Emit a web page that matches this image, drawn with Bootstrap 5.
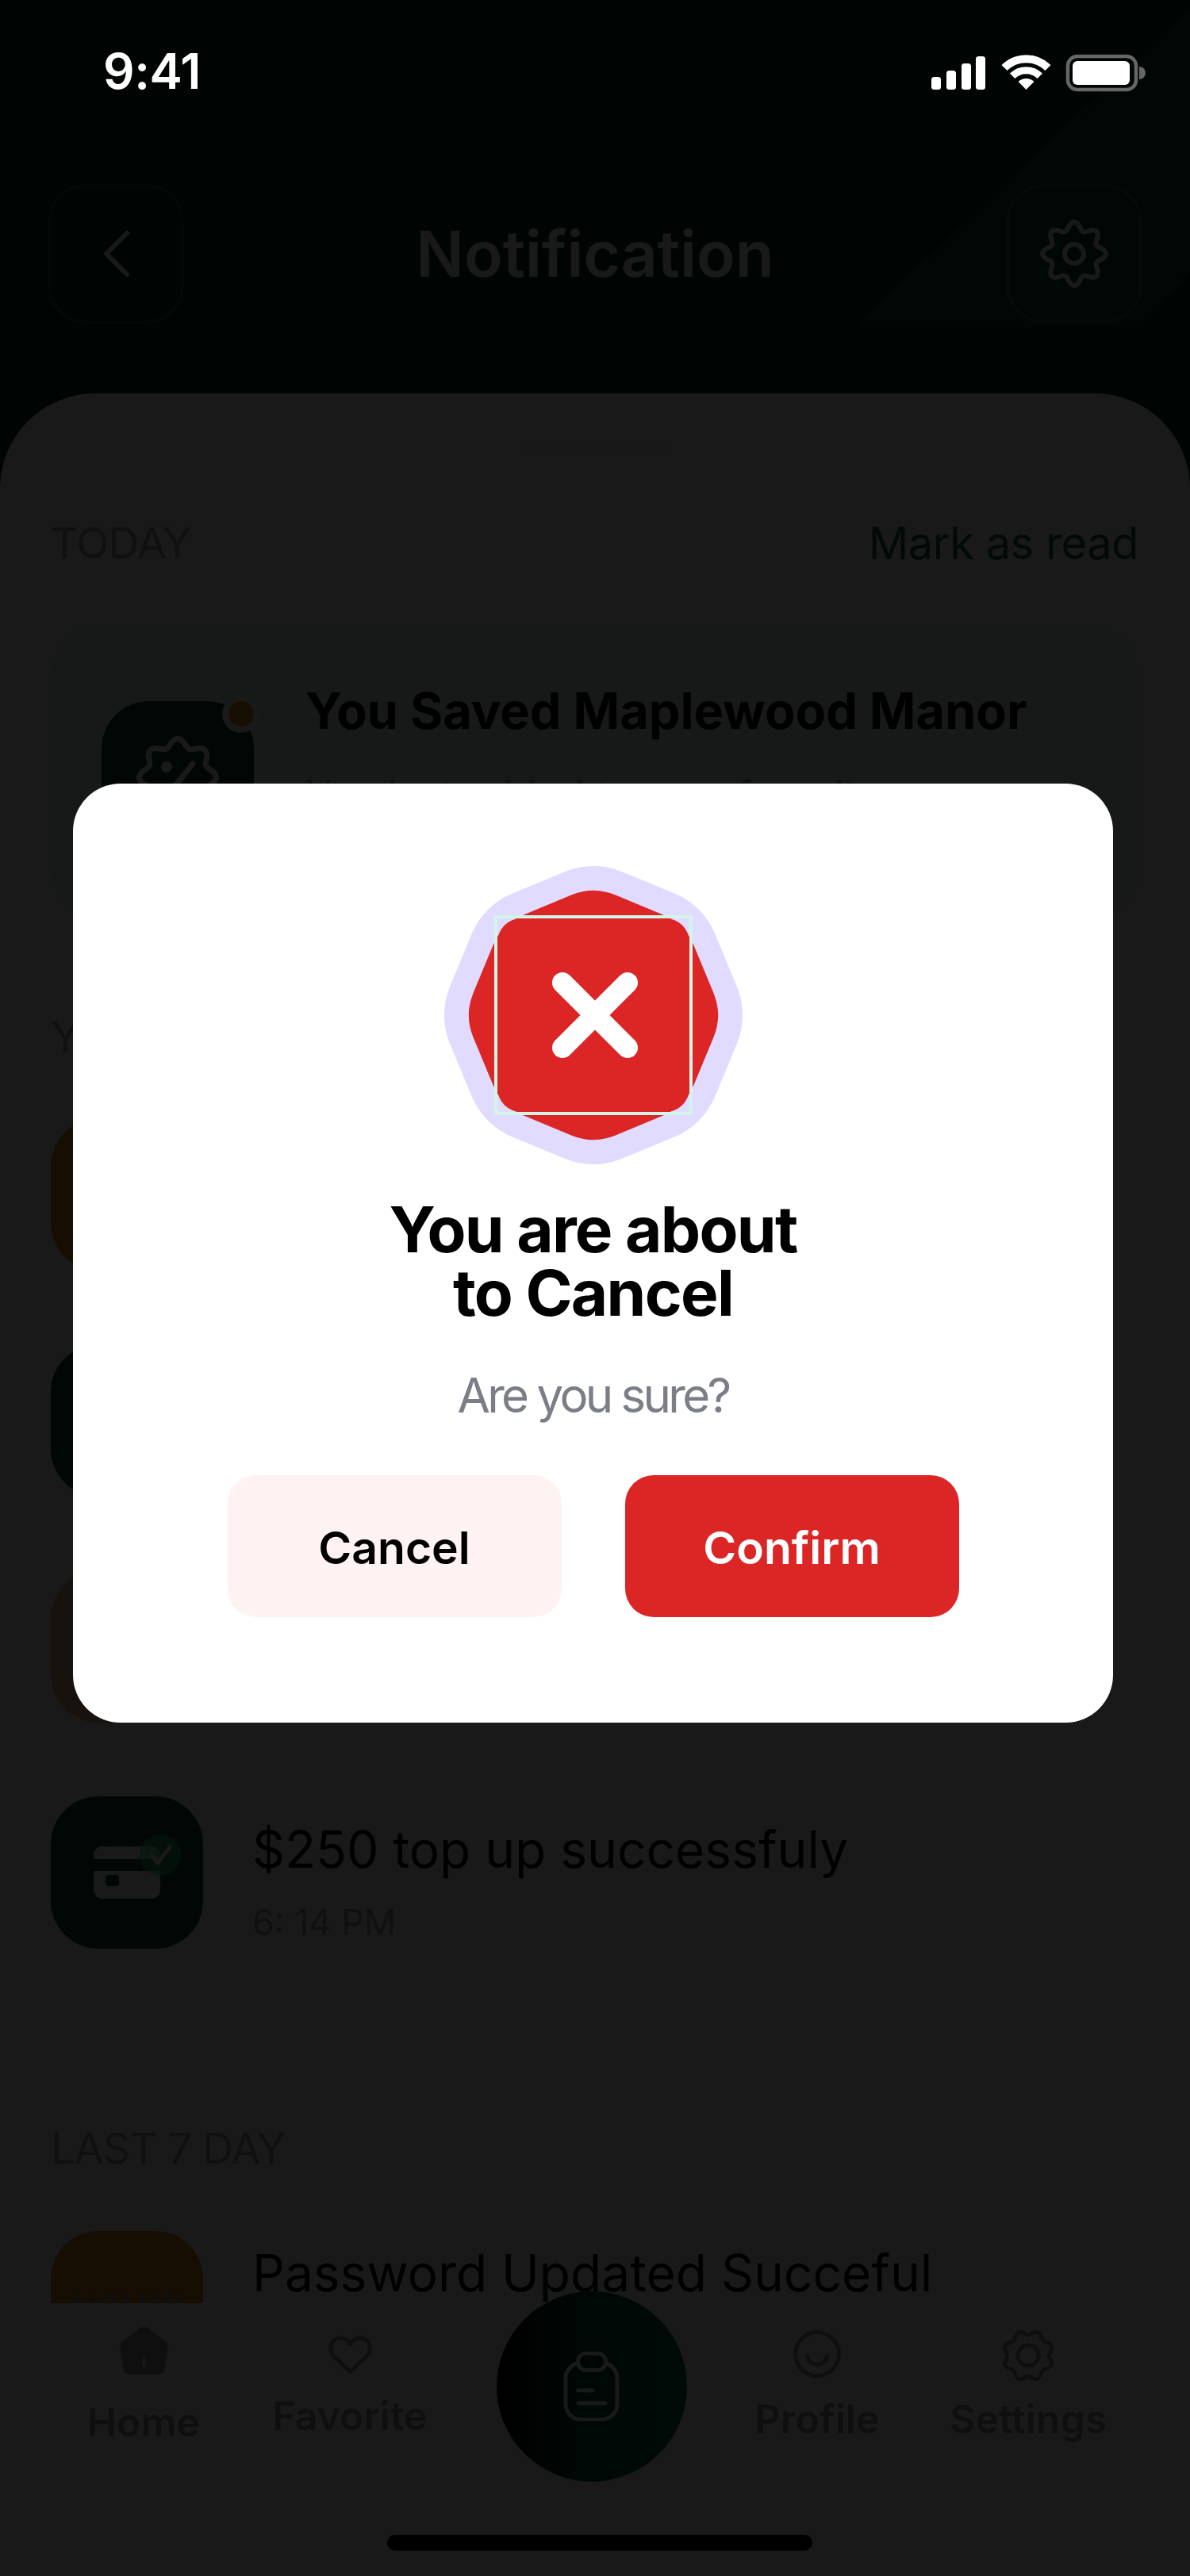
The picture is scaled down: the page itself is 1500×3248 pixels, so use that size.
<!DOCTYPE html>
<html lang="en">
<head>
  <meta charset="UTF-8">
  <meta name="viewport" content="width=device-width, initial-scale=1">
  <title>Notification</title>
  <link href="https://cdn.jsdelivr.net/npm/bootstrap@5.3.3/dist/css/bootstrap.min.css" rel="stylesheet">
  <style>
    :root {
      --verde-escuro: #002a20;
      --vermelho: #dc2626;
    }

    body {
      margin: 0;
      background: #000;
      font-family: "Inter", "Liberation Sans", sans-serif;
    }

    .tela {
      position: relative;
      width: 1500px;
      height: 3248px;
      overflow: hidden;
      background: var(--verde-escuro);
    }

    .fundo-topo {
      position: absolute;
      left: 0;
      top: 0;
    }

    /* status bar */
    .barra-status {
      position: relative;
      z-index: 5;
      height: 232px;
      padding: 48px 55px 0 130px;
      color: #fff;
      font-size: 62px;
      font-weight: 600;
      line-height: 84px;
      letter-spacing: -.5px;
    }

    .barra-status svg {
      margin-top: 12px;
    }

    /* header */
    .cabecalho {
      position: relative;
      height: 264px;
      padding: 0 60px;
    }

    .botao-topo {
      width: 172px;
      height: 176px;
      border: 4px solid rgba(255, 255, 255, .14);
      border-radius: 48px;
    }

    .titulo-topo {
      margin-top: 40px;
      color: #fff;
      font-size: 80px;
      font-weight: 600;
      line-height: 96px;
    }

    /* sheet */
    .folha {
      position: relative;
      height: 2408px;
      padding: 62px 65px 0 64px;
      overflow: hidden;
      background: #fff;
      border-radius: 120px 120px 0 0;
    }

    .puxador {
      width: 190px;
      height: 14px;
      margin: 0 auto 83px;
      border-radius: 7px;
      background: #eee;
    }

    .secao {
      height: 60px;
      font-size: 54px;
      line-height: 60px;
      color: #a0a3ad;
      letter-spacing: -1px;
    }

    .marcar {
      color: #146a50;
      font-size: 56px;
      letter-spacing: -.5px;
    }

    .cartao-aviso {
      height: 372px;
      margin: 73px 0 118px;
      padding: 96px 64px 0;
      gap: 65px;
      background: #eafff8;
      border-radius: 64px;
    }

    .caixa-icone {
      position: relative;
      flex: none;
      width: 192px;
      height: 192px;
      border-radius: 60px;
      background: #004a38;
    }

    .caixa-laranja { background: #e89020; }
    .caixa-areia { background: #f0ba90; }

    .ponto-novo {
      position: absolute;
      right: -8px;
      top: -8px;
      width: 48px;
      height: 48px;
      border: 8px solid #fff;
      border-radius: 50%;
      background: #ee9a20;
    }

    .selo-ok {
      position: absolute;
      left: 110px;
      top: 46px;
    }

    .linha-aviso {
      gap: 62px;
      height: 192px;
      margin-top: 93px;
    }

    .primeira { margin-top: 72px; }

    .aviso-titulo {
      color: #000;
      font-size: 64px;
      line-height: 76px;
    }

    .aviso-titulo-forte {
      margin-top: -26px;
      color: #000;
      font-size: 63px;
      font-weight: 700;
      line-height: 76px;
    }

    .aviso-sub {
      margin-top: 24px;
      color: #a0a3ad;
      font-size: 44.5px;
      line-height: 60px;
    }

    .aviso-sub-cartao {
      margin-top: 38px;
      font-size: 50px;
    }

    .texto-aviso { padding-top: 26px; }
    .ultimo-titulo { margin-top: 15px; }

    .ultima-secao { margin-top: 222px; }
    .ultima-linha { margin-top: 74px; }

    .rotulo-data {
      padding-top: 63px;
      color: #a09070;
      font-size: 44px;
      font-weight: 600;
      line-height: 66px;
      text-align: center;
    }

    /* bottom nav */
    .grade-nav {
      display: grid;
      grid-template-columns: 262px 258px 352px 216px 316px;
      height: 224px;
      padding-left: 50px;
      background: #fff;
    }

    .item-nav {
      color: #999;
      font-size: 50px;
      font-weight: 600;
      line-height: 60px;
      text-align: center;
    }

    .item-nav svg { display: block; margin: 0 auto; }
    .nav-home { padding-top: 30px; }
    .nav-home span { display: block; margin-top: 30px; }
    .nav-fav { padding-top: 41px; }
    .nav-fav span { display: block; margin-top: 22px; }
    .nav-perfil { padding-top: 34px; }
    .nav-perfil span { display: block; margin-top: 22px; }
    .nav-ajustes { padding-top: 32px; }
    .nav-ajustes span { display: block; margin-top: 16px; }

    .botao-central {
      position: relative;
      width: 240px;
      height: 240px;
      margin: -15px auto 0;
      border-radius: 50%;
      background: linear-gradient(90deg, #000 0%, #00503a 45%, #006a44 100%);
    }

    .barra-home {
      width: 536px;
      height: 20px;
      margin: 0 0 0 488px;
      border-radius: 10px;
      background: #000;
    }

    .faixa-home {
      height: 120px;
      padding-top: 68px;
      background: #fff;
    }

    /* dialog */
    .fundo-modal {
      position: absolute;
      inset: 0;
      z-index: 4;
      padding: 988px 0 0 92px;
      background: rgba(0, 0, 0, .9);
    }

    .dialogo {
      width: 1311px;
      height: 1184px;
      padding-top: 104px;
      border: 0;
      border-radius: 60px;
      background: #fff;
    }

    .dialogo-titulo {
      margin: 42px 0 0;
      color: #000;
      font-size: 80px;
      font-weight: 700;
      line-height: 80px;
      letter-spacing: -1.7px;
    }

    .dialogo-sub {
      margin: 54px 0 66px;
      color: #7b7d87;
      font-size: 60px;
      line-height: 70px;
      letter-spacing: -3.7px;
    }

    .fila-botoes { gap: 80px; }

    .botao-dialogo {
      width: 421px;
      height: 179px;
      padding-top: 10px;
      border: 0;
      border-radius: 36px;
      font-size: 57px;
      font-weight: 600;
    }

    .botao-cancelar, .botao-cancelar:hover { background: #fef2f2; color: #000; }
    .botao-confirmar, .botao-confirmar:hover { background: var(--vermelho); color: #fff; }
  </style>
</head>
<body>

  <div class="tela">

    <!-- fundo do topo -->
    <svg class="fundo-topo" width="1500" height="500" viewBox="0 0 1500 500">
      <polygon points="1500,10 1076,413 1440,413 1500,343" fill="#004c32"/>
      <path d="M167 0 L0 167 M1368 0 L966 410 M980 350 L1060 260 M800 500 L850 430" stroke="#1a3a32" stroke-width="4"/>
    </svg>

    <div class="barra-status d-flex justify-content-between align-items-start">
      <span>9:41</span>
      <svg width="275" height="60" viewBox="1170 60 275 60">
        <g fill="#fff">
          <rect x="1174" y="97" width="12" height="16" rx="3.5"/>
          <rect x="1193" y="89" width="12" height="24" rx="3.5"/>
          <rect x="1212" y="80" width="12" height="33" rx="3.5"/>
          <rect x="1230" y="71" width="12" height="42" rx="3.5"/>
          <path d="M1293.5 113 L1283.6 103.1 A14 14 0 0 1 1303.4 103.1 Z"/>
        </g>
        <g fill="none" stroke="#fff">
          <path d="M1276.2 95.8 A24.5 24.5 0 0 1 1310.8 95.8" stroke-width="9"/>
          <path d="M1266 85.5 A39 39 0 0 1 1321 85.5" stroke-width="10"/>
        </g>
        <rect x="1346" y="71" width="86" height="42" rx="12" fill="none" stroke="#666" stroke-width="4.5"/>
        <rect x="1352" y="77" width="72" height="30" rx="6" fill="#fff"/>
        <path d="M1436 84 A8 8 0 0 1 1436 100 Z" fill="#666"/>
      </svg>
    </div>

    <div class="cabecalho d-flex justify-content-between align-items-start">
      <div class="botao-topo d-flex align-items-center justify-content-center">
        <svg width="40" height="64" viewBox="0 0 40 64"><path d="M34 6 L8 32 L34 58" fill="none" stroke="#fff" stroke-width="6" stroke-linecap="round" stroke-linejoin="round"/></svg>
      </div>
      <div class="titulo-topo">Notification</div>
      <div class="botao-topo d-flex align-items-center justify-content-center">
        <svg width="92" height="92" viewBox="-46 -46 92 92">
          <path class="engrenagem" data-r="35" data-a="-5" fill="none" stroke="#fff" stroke-width="6"/>
          <circle r="12" fill="none" stroke="#fff" stroke-width="6"/>
        </svg>
      </div>
    </div>

    <div class="folha">
      <div class="puxador"></div>

      <div class="d-flex justify-content-between secao">
        <span>TODAY</span>
        <span class="marcar">Mark as read</span>
      </div>

      <div class="cartao-aviso d-flex align-items-start">
        <div class="caixa-icone">
          <span class="ponto-novo"></span>
          <svg class="d-block" width="192" height="192" viewBox="-96 -96 192 192">
            <path class="engrenagem" data-r="43.5" data-a="-5" fill="none" stroke="#fff" stroke-width="7"/>
            <circle cx="-14" cy="-13" r="7" fill="#fff"/>
            <path d="M-14 24 L19 -17" stroke="#fff" stroke-width="7" stroke-linecap="round"/>
          </svg>
        </div>
        <div>
          <div class="aviso-titulo-forte">You Saved Maplewood Manor</div>
          <div class="aviso-sub aviso-sub-cartao">You just added to your favorite</div>
        </div>
      </div>

      <div class="secao">YESTERDAY</div>

      <div class="linha-aviso primeira d-flex"><div class="caixa-icone caixa-laranja"></div></div>
      <div class="linha-aviso d-flex"><div class="caixa-icone"></div></div>
      <div class="linha-aviso d-flex"><div class="caixa-icone caixa-areia"></div></div>

      <div class="linha-aviso d-flex align-items-center">
        <div class="caixa-icone">
          <svg class="d-block" width="192" height="192" viewBox="0 0 192 192">
            <rect x="54" y="63" width="84" height="66" rx="11" fill="#fff"/>
            <rect x="54" y="79" width="84" height="15" fill="#004a38"/>
            <rect x="69" y="99" width="17" height="14" rx="4" fill="#004a38"/>
          </svg>
          <svg class="selo-ok" width="56" height="56" viewBox="0 0 56 56">
            <circle cx="28" cy="28" r="26" fill="#2fd97a" fill-opacity=".6"/>
            <path d="M17 29 L25 38 L40 18" fill="none" stroke="#fff" stroke-width="5" stroke-linecap="round" stroke-linejoin="round"/>
          </svg>
        </div>
        <div class="texto-aviso">
          <div class="aviso-titulo">$250 top up successfuly</div>
          <div class="aviso-sub">6: 14 PM</div>
        </div>
      </div>

      <div class="secao ultima-secao">LAST 7 DAY</div>

      <div class="linha-aviso ultima-linha d-flex align-items-start">
        <div class="caixa-icone caixa-laranja rotulo-data">NOV10</div>
        <div class="aviso-titulo ultimo-titulo">Password Updated Succeful</div>
      </div>
    </div>

    <nav class="grade-nav">
      <div class="item-nav nav-home">
        <svg width="61" height="60" viewBox="0 0 61 60">
          <path d="M24 2 Q30.5 -2 37 2 L57 18 Q61 21 60.5 26 L57 52 Q56 60 48 60 L13 60 Q5 60 4 52 L.5 26 Q0 21 4 18 Z" fill="#999"/>
          <rect x="28.5" y="37" width="4" height="13" fill="#fff"/>
        </svg>
        <span>Home</span>
      </div>
      <div class="item-nav nav-fav">
        <svg width="55" height="49" viewBox="0 0 55 49">
          <path d="M27.5 45.5 L7 26 C-2 15 5 3 15 3 C21 3 25 6 27.5 11 C30 6 34 3 40 3 C50 3 57 15 48 26 Z" fill="none" stroke="#999" stroke-width="5" stroke-linejoin="round"/>
        </svg>
        <span>Favorite</span>
      </div>
      <div>
        <div class="botao-central d-flex align-items-center justify-content-center">
          <svg width="72" height="88" viewBox="0 0 72 88">
            <rect x="3" y="14" width="65" height="72" rx="20" fill="none" stroke="#fff" stroke-width="5"/>
            <rect x="18.5" y="2.5" width="35" height="21" rx="10" fill="#004030" stroke="#fff" stroke-width="5"/>
            <path d="M19 49 H37 M19 65 H53" stroke="#fff" stroke-width="5" stroke-linecap="round"/>
          </svg>
        </div>
      </div>
      <div class="item-nav nav-perfil">
        <svg width="60" height="60" viewBox="0 0 60 60">
          <circle cx="30" cy="30" r="27.5" fill="none" stroke="#999" stroke-width="5"/>
          <path d="M17 30 A13 13 0 0 0 43 30" fill="none" stroke="#999" stroke-width="5"/>
        </svg>
        <span>Profile</span>
      </div>
      <div class="item-nav nav-ajustes">
        <svg width="68" height="68" viewBox="-34 -34 68 68">
          <path class="engrenagem" data-r="29" data-a="2.6" fill="none" stroke="#999" stroke-width="5"/>
          <circle r="13" fill="none" stroke="#999" stroke-width="5"/>
        </svg>
        <span>Settings</span>
      </div>
    </nav>

    <div class="faixa-home"><div class="barra-home"></div></div>

    <!-- modal -->
    <div class="fundo-modal d-flex align-items-start">
      <div class="modal-content dialogo text-center align-items-center">
        <svg width="376" height="376" viewBox="-188 -188 376 376">
          <polygon class="octogono" data-r="93" fill="#e0dbff" stroke="#e0dbff" stroke-width="190" stroke-linejoin="round"/>
          <polygon class="octogono" data-r="84" fill="#dc2626" stroke="#dc2626" stroke-width="146" stroke-linejoin="round"/>
          <path d="M-125 -126 H125 V126 H-125 Z M-121 -122 V122 H121 V-122 Z" fill="#d1f5e6" fill-rule="evenodd"/>
          <rect x="-121" y="-122" width="242" height="244" rx="30" fill="#dc2626"/>
          <path d="M-39 -41 L43 41 M43 -41 L-39 41" stroke="#fff" stroke-width="26" stroke-linecap="round"/>
        </svg>
        <h2 class="dialogo-titulo">You are about<br>to Cancel</h2>
        <p class="dialogo-sub">Are you sure?</p>
        <div class="d-flex fila-botoes">
          <button type="button" class="btn botao-dialogo botao-cancelar">Cancel</button>
          <button type="button" class="btn botao-dialogo botao-confirmar">Confirm</button>
        </div>
      </div>
    </div>

  </div>

  <script src="https://cdn.jsdelivr.net/npm/bootstrap@5.3.3/dist/js/bootstrap.bundle.min.js"></script>
  <script>
    // contorno ondulado das engrenagens
    document.querySelectorAll(".engrenagem").forEach(el => {
      const r = +el.dataset.r, a = +el.dataset.a;
      let d = "";
      for (let i = 0; i < 240; i++) {
        const t = i / 240 * Math.PI * 2;
        const raio = r - a * Math.cos(8 * t);
        d += (i ? "L" : "M") + (raio * Math.sin(t)).toFixed(2) + " " + (-raio * Math.cos(t)).toFixed(2);
      }
      el.setAttribute("d", d + "Z");
    });

    document.querySelectorAll(".octogono").forEach(el => {
      const r = +el.dataset.r, pts = [];
      for (let i = 0; i < 8; i++) {
        const t = i / 8 * Math.PI * 2;
        pts.push((r * Math.sin(t)).toFixed(2) + "," + (-r * Math.cos(t)).toFixed(2));
      }
      el.setAttribute("points", pts.join(" "));
    });
  </script>

</body>
</html>
